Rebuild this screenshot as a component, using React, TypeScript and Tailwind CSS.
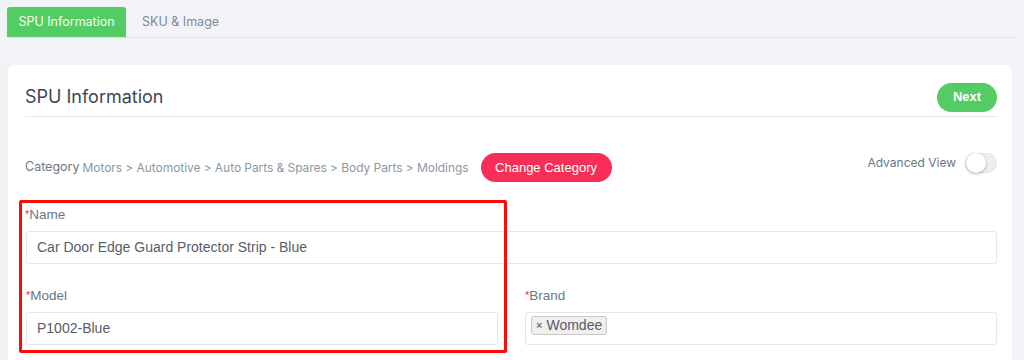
import React from "react";

const rubik = { fontFamily: "Inter, 'Noto Sans', sans-serif" };

function Label({ text }: { text: string }) {
  return (
    <div className="h-[16px] text-[13.5px] leading-[17px] text-[#6b7785]" style={{ fontFamily: "'Liberation Sans', Arial, sans-serif" }}>
      <span className="text-[#f0304f] text-[11px] align-top">*</span>
      {text}
    </div>
  );
}

export default function App() {
  return (
    <div className="w-[1024px] h-[360px] overflow-hidden bg-[#f1f3f6] pl-[8px] pr-[9px] pt-[7px]" style={rubik}>
      <div className="flex items-end border-b border-[#dde2e8] h-[31px]">
        <div className="h-[30px] w-[119px] -ml-[1px] rounded-t-[3px] bg-[#52cc63] text-[#f3fff4] text-[12.5px] flex items-center justify-center">
          SPU Information
        </div>
        <div className="h-[30px] px-[16px] text-[12.5px] text-[#7f8a97] flex items-center">SKU &amp; Image</div>
      </div>

      <div className="mt-[27px] w-[1004px] h-[400px] bg-white rounded-[6px] pl-[17px] pr-[15px] pt-[18px] shadow-[0_0_2px_rgba(0,0,0,0.04)]">
        <div className="flex items-center justify-between h-[34px] pb-[5px] border-b border-[#e6e9ed]">
          <div className="text-[18px] text-[#3d4756] leading-[22px] -mt-[1px]">SPU Information</div>
          <button className="h-[29px] w-[60px] rounded-full bg-[#52cc63] text-white text-[13px] font-bold" style={{ fontFamily: "'Liberation Sans', Arial, sans-serif" }}>
            Next
          </button>
        </div>

        <div className="flex justify-between items-start mt-[36px]">
          <div className="flex items-center h-[29px]">
            <span className="text-[12.5px] text-[#6c7682]">Category</span>
            <span className="text-[12px] tracking-[-0.06px] text-[#8e97a2] ml-[3px]">
              Motors &gt; Automotive &gt; Auto Parts &amp; Spares &gt; Body Parts &gt; Moldings
            </span>
            <button className="ml-[12px] h-[29px] w-[131px] rounded-full bg-[#f72f58] text-white text-[13px]" style={{ fontFamily: "'Liberation Sans', Arial, sans-serif" }}>
              Change Category
            </button>
          </div>
          <div className="flex items-center h-[20px] gap-[9px]">
            <span className="text-[12px] text-[#6c7682]">Advanced View</span>
            <div className="relative w-[32px] h-[20px] rounded-full bg-[#eeeeee] border border-[#e3e3e3]">
              <div className="absolute left-0 top-[-1px] w-[20px] h-[20px] rounded-full bg-white shadow-[0_1px_3px_rgba(0,0,0,0.3)]" />
            </div>
          </div>
        </div>

        <div className="relative mt-[18px] pt-[6px]" style={{ fontFamily: "'Liberation Sans', Arial, sans-serif" }}>
          <Label text="Name" />
          <div className="mt-[9px] ml-[1px] h-[33px] border border-[#e3e6ea] rounded-[3px] flex items-center px-[10px] text-[14px] text-[#555e6a]">
            Car Door Edge Guard Protector Strip - Blue
          </div>

          <div className="grid grid-cols-2 gap-[27px] mt-[23px] ml-[1px]">
            <div>
              <Label text="Model" />
              <div className="mt-[9px] h-[33px] border border-[#e3e6ea] rounded-[3px] flex items-center px-[10px] text-[14px] text-[#555e6a]">
                P1002-Blue
              </div>
            </div>
            <div>
              <Label text="Brand" />
              <div className="mt-[9px] h-[33px] border border-[#e3e6ea] rounded-[3px] flex items-start pt-[3px] px-[5px]">
                <span className="h-[19px] px-[4px] flex items-center gap-[4px] bg-[#efefef] border border-[#c9c9c9] rounded-[3px] text-[14px] text-[#555e6a]">
                  <span className="text-[11px] font-bold text-[#777]">×</span>Womdee
                </span>
              </div>
            </div>
          </div>

          <div className="absolute left-[-6px] top-0 w-[488px] h-[153px] border-[3px] border-[#ff0a0a] rounded-[2px] pointer-events-none" />
        </div>
      </div>
    </div>
  );
}
